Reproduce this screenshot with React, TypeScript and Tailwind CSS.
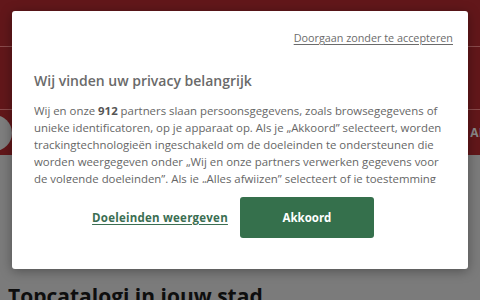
import React from 'react';

export default function App() {
    return (
        <div className="relative w-[480px] h-[300px] overflow-hidden bg-[#7b7b7b] font-['Open_Sans',sans-serif]">
            {/* achtergrondpagina */}
            <div className="bg-[#62171a]">
                <div className="h-[47px] border-b border-[#8a4b4c]" />
                <div className="h-[63px] border-b border-[#8a4b4c]" />
                <div className="h-[45px] flex items-center justify-between">
                    <div className="w-[36px] h-[36px] rounded-full bg-[#7e7e7e] -ml-[24px]" />
                    <span className="text-[12px] font-bold text-[#8a8a8a] -mr-[14px] tracking-wide whitespace-nowrap">ARE</span>
                </div>
            </div>
            <div className="pt-[128px] px-[8px]">
                <h1 className="text-[21px] font-bold text-[#0e0e0e] leading-[26px]">Topcatalogi in jouw stad</h1>
            </div>

            {/* privacy dialoog */}
            <div className="absolute left-[12px] top-[11px] w-[456px] h-[258px] bg-white rounded-[3px] shadow-[0_2px_12px_rgba(0,0,0,0.35)]">
                <div className="flex justify-end pt-[20px] pr-[15px]">
                    <a className="text-[10.8px] text-[#6b6b6b] underline underline-offset-2 leading-[14px]">
                        Doorgaan zonder te accepteren
                    </a>
                </div>
                <h2 className="mt-[26px] px-[22px] text-[14px] font-semibold text-[#6a6a6a] leading-[20px]">
                    Wij vinden uw privacy belangrijk
                </h2>
                <div className="mt-[11px] ml-[22px] mr-[22px] h-[81px] overflow-hidden">
                    <p className="text-[11.4px] leading-[17px] text-[#666]">
                        Wij en onze <b className="text-[#555]">912</b> partners slaan persoonsgegevens, zoals browsegegevens of
                        unieke identificatoren, op je apparaat op. Als je „Akkoord” selecteert, worden
                        trackingtechnologieën ingeschakeld om de doeleinden te ondersteunen die
                        worden weergegeven onder „Wij en onze partners verwerken gegevens voor
                        de volgende doeleinden”. Als je „Alles afwijzen” selecteert of je toestemming
                        intrekt, worden deze technologieën niet gebruikt.
                    </p>
                </div>
                <div className="mt-[14px] flex items-center justify-center gap-[12px] pr-[14px]">
                    <a className="text-[11.5px] font-bold text-[#3b6e52] underline underline-offset-2 tracking-[0.02em]">
                        Doeleinden weergeven
                    </a>
                    <button className="w-[134px] h-[41px] rounded-[3px] bg-[#35704c] text-white text-[11.5px] font-bold">
                        Akkoord
                    </button>
                </div>
            </div>
        </div>
    );
}
